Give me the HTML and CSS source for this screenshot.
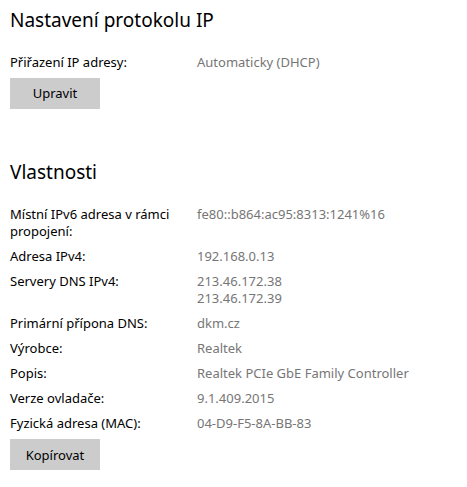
FILE: index.html
```html
<!DOCTYPE html>
<html lang="cs">
<head>
<meta charset="utf-8">
<title>Nastavení protokolu IP</title>
<link rel="stylesheet" href="styles.css">
</head>
<body>
<section class="sec sec-ip">
  <h1 class="title">Nastavení protokolu IP</h1>
  <div class="props props-ip">
    <div class="label">Přiřazení IP adresy:</div>
    <div class="value">Automaticky (DHCP)</div>
  </div>
  <button class="btn">Upravit</button>
</section>
<section class="sec sec-props">
  <h2 class="title">Vlastnosti</h2>
  <div class="props">
    <div class="label">Místní IPv6 adresa v rámci propojení:</div>
    <div class="value">fe80::b864:ac95:8313:1241%16</div>
    <div class="label">Adresa IPv4:</div>
    <div class="value">192.168.0.13</div>
    <div class="label">Servery DNS IPv4:</div>
    <div class="value">213.46.172.38<br>213.46.172.39</div>
    <div class="label">Primární přípona DNS:</div>
    <div class="value">dkm.cz</div>
    <div class="label">Výrobce:</div>
    <div class="value">Realtek</div>
    <div class="label">Popis:</div>
    <div class="value">Realtek PCIe GbE Family Controller</div>
    <div class="label">Verze ovladače:</div>
    <div class="value">9.1.409.2015</div>
    <div class="label">Fyzická adresa (MAC):</div>
    <div class="value">04-D9-F5-8A-BB-83</div>
  </div>
  <button class="btn">Kopírovat</button>
</section>
</body>
</html>
```
FILE: styles.css
```css
html, body {
  margin: 0;
  background: #ffffff;
}
body {
  padding: 6px 10px 0 10px;
  font-family: "Noto Sans", "Open Sans", "DejaVu Sans", sans-serif;
  font-size: 13px;
  line-height: 17px;
  color: #000000;
}
.sec {
  display: flex;
  flex-direction: column;
  align-items: flex-start;
}
.title {
  margin: 0;
  font-size: 19px;
  line-height: 28px;
  font-weight: 400;
  color: #000000;
}
.sec-props {
  margin-top: 49px;
}
.props {
  display: grid;
  grid-template-columns: 187px 1fr;
  row-gap: 8px;
  width: 100%;
  margin-top: 20.5px;
}
.props-ip {
  margin-top: 19.5px;
}
.label {
  padding-right: 14px;
  color: #000000;
}
.value {
  color: #767676;
}
.btn {
  margin-top: 7px;
  width: 90px;
  height: 31px;
  border: none;
  background: #cccccc;
  color: #000000;
  font-family: inherit;
  font-size: 13px;
  padding: 0;
}
```
